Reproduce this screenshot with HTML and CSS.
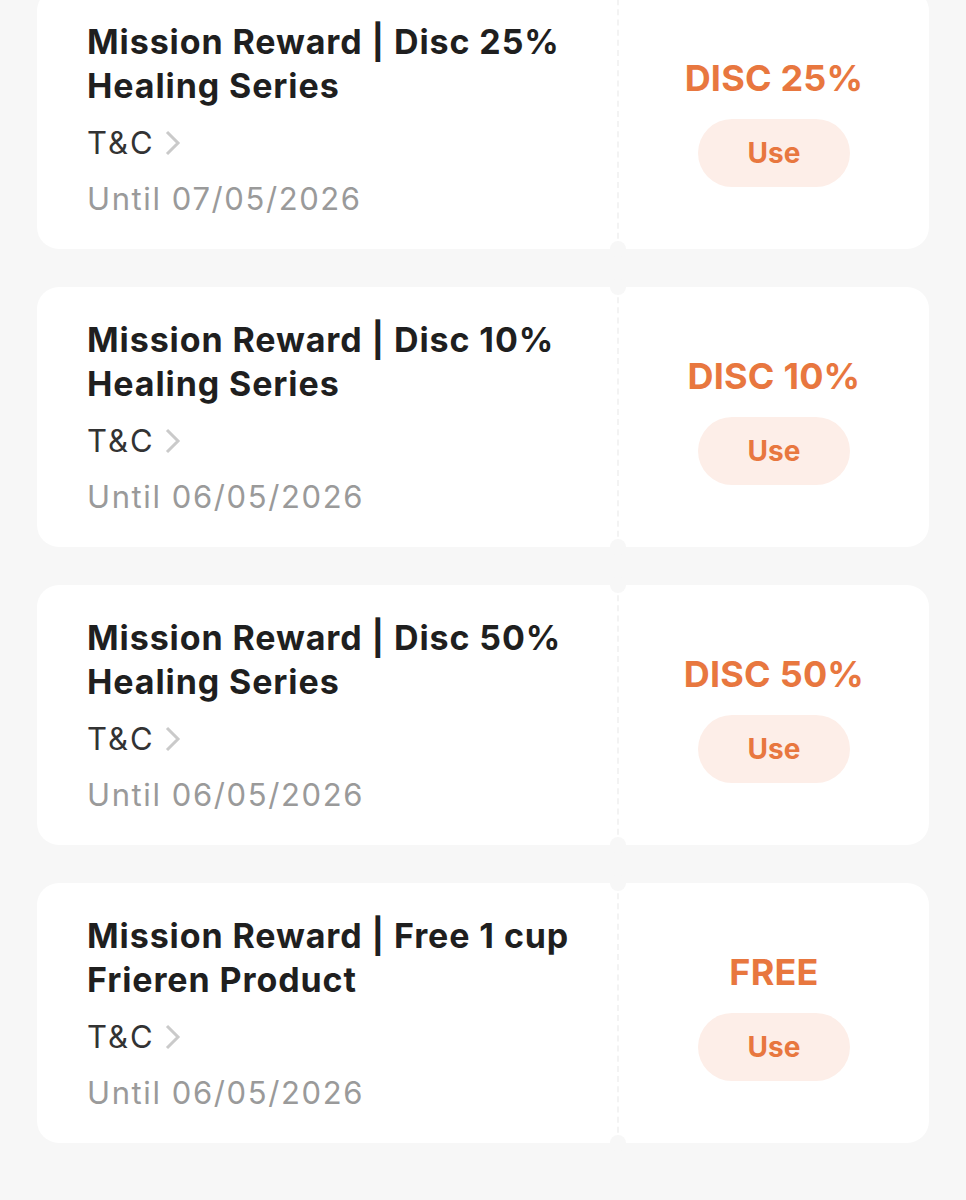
FILE: index.html
```html
<!DOCTYPE html>
<html lang="en">
<head>
  <meta charset="UTF-8" />
  <meta name="viewport" content="width=device-width, initial-scale=1" />
  <title>My Vouchers</title>
  <link rel="stylesheet" href="styles.css">
</head>
<body>
  <div class="voucher-list">

    <div class="voucher">
      <div class="voucher-info">
        <div class="voucher-title">Mission Reward | Disc 25% Healing Series</div>
        <a class="voucher-tnc" href="#">T&amp;C
          <svg viewBox="0 0 18 28"><path d="M3 3l11 11-11 11"/></svg>
        </a>
        <div class="voucher-date">Until 07/05/2026</div>
      </div>
      <div class="voucher-side">
        <div class="voucher-value">DISC 25%</div>
        <button class="use-btn">Use</button>
      </div>
    </div>

    <div class="voucher">
      <div class="voucher-info">
        <div class="voucher-title">Mission Reward | Disc 10% Healing Series</div>
        <a class="voucher-tnc" href="#">T&amp;C
          <svg viewBox="0 0 18 28"><path d="M3 3l11 11-11 11"/></svg>
        </a>
        <div class="voucher-date">Until 06/05/2026</div>
      </div>
      <div class="voucher-side">
        <div class="voucher-value">DISC 10%</div>
        <button class="use-btn">Use</button>
      </div>
    </div>

    <div class="voucher">
      <div class="voucher-info">
        <div class="voucher-title">Mission Reward | Disc 50% Healing Series</div>
        <a class="voucher-tnc" href="#">T&amp;C
          <svg viewBox="0 0 18 28"><path d="M3 3l11 11-11 11"/></svg>
        </a>
        <div class="voucher-date">Until 06/05/2026</div>
      </div>
      <div class="voucher-side">
        <div class="voucher-value">DISC 50%</div>
        <button class="use-btn">Use</button>
      </div>
    </div>

    <div class="voucher">
      <div class="voucher-info">
        <div class="voucher-title">Mission Reward | Free 1 cup Frieren Product</div>
        <a class="voucher-tnc" href="#">T&amp;C
          <svg viewBox="0 0 18 28"><path d="M3 3l11 11-11 11"/></svg>
        </a>
        <div class="voucher-date">Until 06/05/2026</div>
      </div>
      <div class="voucher-side">
        <div class="voucher-value">FREE</div>
        <button class="use-btn">Use</button>
      </div>
    </div>

  </div>
</body>
</html>
```

FILE: styles.css
```css
html, body {
  margin: 0;
  padding: 0;
  background: #f7f7f7;
  font-family: Inter, 'Liberation Sans', sans-serif;
  color: #1f1f1f;
}
.voucher-list {
  display: flex;
  flex-direction: column;
  gap: 38px;
  padding: 0 37px 40px;
  margin-top: -11px;
}
.voucher {
  display: grid;
  grid-template-columns: 580px 1fr;
  background: #fff;
  border-radius: 22px;
  height: 260px;
  box-sizing: border-box;
}
.voucher-info {
  display: flex;
  flex-direction: column;
  justify-content: center;
  padding: 0 20px 0 50px;
}
.voucher-title {
  font-size: 34px;
  line-height: 44px;
  font-weight: 700;
  letter-spacing: 0.9px;
  max-width: 500px;
}
.voucher-tnc {
  display: flex;
  align-items: center;
  gap: 9px;
  margin-top: 15px;
  font-size: 31px;
  line-height: 40px;
  letter-spacing: 2px;
  color: #333;
  text-decoration: none;
}
.voucher-tnc svg {
  width: 18px;
  height: 28px;
  fill: none;
  stroke: #cacaca;
  stroke-width: 3;
}
.voucher-date {
  margin-top: 16px;
  font-size: 31px;
  line-height: 40px;
  letter-spacing: 1.6px;
  color: #9a9a9a;
}
.voucher-side {
  position: relative;
  display: flex;
  flex-direction: column;
  align-items: center;
  justify-content: center;
  gap: 19px;
  border-left: 2px dashed #f3f3f3;
  padding-top: 4px;
}
.voucher-side::before,
.voucher-side::after {
  content: "";
  position: absolute;
  left: -9px;
  width: 16px;
  height: 16px;
  border-radius: 50%;
  background: #f7f7f7;
}
.voucher-side::before {
  top: -8px;
}
.voucher-side::after {
  bottom: -8px;
}
.voucher-value {
  font-size: 36px;
  line-height: 44px;
  font-weight: 700;
  letter-spacing: 0.2px;
  color: #e8773f;
}
.use-btn {
  width: 152px;
  height: 68px;
  border: none;
  border-radius: 34px;
  background: #fdeee8;
  color: #e8773f;
  font-family: inherit;
  font-size: 28px;
  font-weight: 700;
  cursor: pointer;
}
```
